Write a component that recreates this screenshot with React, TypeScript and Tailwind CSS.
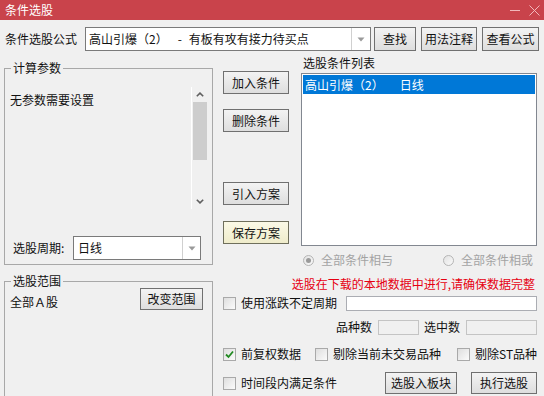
import React from "react";

function Btn({ children, className = "", hot = false }: { children: React.ReactNode; className?: string; hot?: boolean }) {
  return (
    <div
      className={
        "flex items-center justify-center border text-[12px] leading-[16px] text-[#111] shrink-0 " +
        (hot
          ? "border-[#6f6f5c] bg-gradient-to-b from-[#fbf9e6] to-[#efeccb] "
          : "border-[#707070] bg-gradient-to-b from-[#f3f3f3] to-[#dedede] ") +
        className
      }
    >
      {children}
    </div>
  );
}

function Check({ checked = false }: { checked?: boolean }) {
  return (
    <span className="w-[13px] h-[13px] border border-[#a9a9a9] bg-gradient-to-br from-[#dedede] to-[#fbfbfb] flex items-center justify-center shrink-0">
      {checked && (
        <svg width="9" height="9" viewBox="0 0 9 9">
          <path d="M1 4.5 L3.5 7 L8 1.5" fill="none" stroke="#218a21" strokeWidth="1.8" />
        </svg>
      )}
    </span>
  );
}

function Radio({ checked = false }: { checked?: boolean }) {
  return (
    <span className="w-[11px] h-[11px] rounded-full border border-[#b5b5b5] bg-gradient-to-br from-[#e2e2e2] to-[#fafafa] flex items-center justify-center shrink-0">
      {checked && <span className="w-[5px] h-[5px] rounded-full bg-[#9a9a9a]" />}
    </span>
  );
}

function DropArrow() {
  return (
    <svg width="8" height="5" viewBox="0 0 8 5">
      <path d="M0.5 0.5 L7.5 0.5 L4 4.5 Z" fill="#9a9a9a" />
    </svg>
  );
}

export default function App() {
  return (
    <div className="w-[544px] h-[396px] bg-[#f0f0f0] overflow-hidden flex flex-col font-['Noto_Sans_CJK_SC','Microsoft_YaHei',sans-serif] text-[12px] leading-[16px] text-[#111]">
      {/* Title bar */}
      <div className="h-[20px] bg-[#c9434b] flex items-center pl-[5px] pr-[4px] shrink-0">
        <span className="text-white text-[12px] leading-[16px]">条件选股</span>
        <div className="ml-auto flex items-center gap-[9px]">
          <svg width="10" height="10" viewBox="0 0 10 10">
            <path d="M0 5.5 H10" stroke="#f2b7ba" strokeWidth="1" />
          </svg>
          <svg width="11" height="11" viewBox="0 0 11 11">
            <path d="M0.5 0.5 L10.5 10.5 M10.5 0.5 L0.5 10.5" stroke="#f2b7ba" strokeWidth="1" />
          </svg>
        </div>
      </div>

      {/* Formula row */}
      <div className="mt-[7px] h-[24px] flex items-center shrink-0">
        <span className="ml-[5px] w-[80px]">条件选股公式</span>
        <div className="w-[286px] h-[24px] border border-[#7a7a7a] bg-white flex items-center">
          <div className="flex-1 flex items-center pl-[3px] whitespace-nowrap">
            <span>高山引爆（2）</span>
            <span className="ml-[10px]">-</span>
            <span className="ml-[7px]">有板有攻有接力待买点</span>
          </div>
          <div className="w-[19px] h-full border-l border-[#d0d0d0] flex items-center justify-center">
            <DropArrow />
          </div>
        </div>
        <Btn className="ml-[3px] w-[42px] h-[24px]">查找</Btn>
        <Btn className="ml-[5px] w-[56px] h-[24px]">用法注释</Btn>
        <Btn className="ml-[5px] w-[57px] h-[24px]">查看公式</Btn>
      </div>

      {/* Main */}
      <div className="flex shrink-0">
        {/* Left column */}
        <div className="ml-[4px] w-[209px] flex flex-col shrink-0">
          <fieldset className="mt-[9px] h-[205px] border border-[#a8a8a8] min-w-0">
            <legend className="ml-[6px] px-[2px] leading-[16px]">计算参数</legend>
            <div className="mt-[11px] ml-[3px] w-[199px] h-[122px] flex">
              <div className="flex-1 pl-[2px] pt-[5px]">无参数需要设置</div>
              <div className="w-px bg-white" />
              <div className="w-[15px] flex flex-col items-center">
                <div className="h-[15px] flex items-center justify-center">
                  <svg width="8" height="5" viewBox="0 0 8 5">
                    <path d="M0.8 4.3 L4 1.1 L7.2 4.3" fill="none" stroke="#606060" strokeWidth="1.6" />
                  </svg>
                </div>
                <div className="w-[14px] h-[58px] bg-[#cdcdcd]" />
                <div className="flex-1" />
                <div className="h-[15px] flex items-center justify-center">
                  <svg width="8" height="5" viewBox="0 0 8 5">
                    <path d="M0.8 0.7 L4 3.9 L7.2 0.7" fill="none" stroke="#606060" strokeWidth="1.6" />
                  </svg>
                </div>
              </div>
            </div>
            <div className="mt-[27px] h-[24px] flex items-center">
              <span className="ml-[8px] w-[60px]">选股周期:</span>
              <div className="w-[128px] h-[24px] border border-[#7a7a7a] bg-white flex items-center">
                <span className="flex-1 pl-[4px]">日线</span>
                <div className="w-[18px] h-full border-l border-[#d0d0d0] flex items-center justify-center">
                  <DropArrow />
                </div>
              </div>
            </div>
          </fieldset>

          <fieldset className="mt-[8px] h-[140px] border border-[#a8a8a8] min-w-0">
            <legend className="ml-[6px] px-[2px] leading-[16px]">选股范围</legend>
            <div className="-mt-[1px] h-[22px] flex items-center">
              <span className="ml-[5px] mt-[5px]">全部Ａ股</span>
              <Btn className="ml-auto mr-[9px] w-[63px] h-[22px]">改变范围</Btn>
            </div>
          </fieldset>
        </div>

        {/* Right side */}
        <div className="ml-[10px] w-[315px] flex flex-col shrink-0">
          <div className="flex h-[195px]">
            <div className="w-[66px] flex flex-col shrink-0">
              <Btn className="mt-[20px] w-[66px] h-[23px]">加入条件</Btn>
              <Btn className="mt-[15px] w-[66px] h-[23px]">删除条件</Btn>
              <Btn className="mt-[50px] w-[66px] h-[23px]">引入方案</Btn>
              <Btn hot className="mt-[16px] w-[66px] h-[23px]">保存方案</Btn>
            </div>
            <div className="ml-[12px] w-[236px] flex flex-col">
              <div className="mt-[4px] pl-[2px] leading-[16px]">选股条件列表</div>
              <div className="mt-[2px] h-[173px] border border-[#828790] bg-white p-px">
                <div className="h-[19px] bg-[#0078d7] text-white flex items-center pl-[2px] whitespace-nowrap">
                  <span>高山引爆（2）</span>
                  <span className="ml-[16px]">日线</span>
                </div>
              </div>
            </div>
          </div>

          {/* Radio row */}
          <div className="mt-[6px] h-[16px] flex items-center text-[#a3a3a3]">
            <span className="ml-[80px]"><Radio checked /></span>
            <span className="ml-[7px]">全部条件相与</span>
            <span className="ml-[50px]"><Radio /></span>
            <span className="ml-[7px]">全部条件相或</span>
          </div>

          {/* Red notice */}
          <div className="mt-[8px] h-[16px] flex justify-end pr-[3px] text-[#e60012] whitespace-nowrap">
            选股在下载的本地数据中进行,请确保数据完整
          </div>

          {/* Row: 使用涨跌不定周期 */}
          <div className="mt-[3px] h-[16px] flex items-center">
            <Check />
            <span className="ml-[5px]">使用涨跌不定周期</span>
            <div className="ml-auto mr-px w-[191px] h-[15px] border border-[#abadb3] bg-white" />
          </div>

          {/* Row: 品种数 / 选中数 */}
          <div className="mt-[8px] h-[16px] flex items-center justify-end pr-px">
            <span>品种数</span>
            <div className="ml-[6px] w-[41px] h-[15px] border border-[#c4c4c4] bg-[#f0f0f0]" />
            <span className="ml-[5px]">选中数</span>
            <div className="ml-[6px] w-[71px] h-[15px] border border-[#c4c4c4] bg-[#f0f0f0]" />
          </div>

          {/* Row: checkboxes */}
          <div className="mt-[11px] h-[16px] flex items-center whitespace-nowrap">
            <Check checked />
            <span className="ml-[5px]">前复权数据</span>
            <span className="ml-[14px]"><Check /></span>
            <span className="ml-[5px]">剔除当前未交易品种</span>
            <span className="ml-[16px]"><Check /></span>
            <span className="ml-[5px]">剔除ST品种</span>
          </div>

          {/* Row: bottom buttons */}
          <div className="mt-[10px] h-[22px] flex items-center">
            <Check />
            <span className="ml-[5px]">时间段内满足条件</span>
            <Btn className="ml-auto w-[72px] h-[22px]">选股入板块</Btn>
            <Btn className="ml-[14px] mr-px w-[66px] h-[22px]">执行选股</Btn>
          </div>
        </div>
      </div>
    </div>
  );
}
